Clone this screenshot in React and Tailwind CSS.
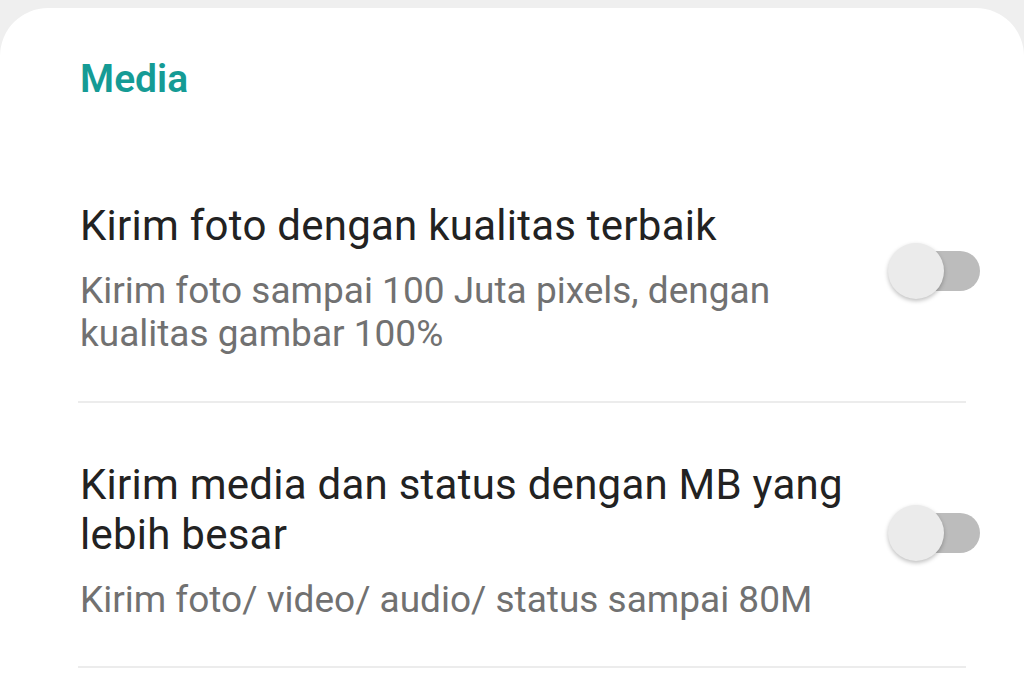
import { useState } from "react";

const Toggle = ({ on, onClick }) => {
  return (
    <button
      onClick={onClick}
      className="relative w-[92px] h-[58px] shrink-0 flex items-center"
    >
      <span className="absolute left-[2px] right-0 h-[40px] rounded-full bg-[#bcbcbc]" />
      <span
        className={`absolute top-[1px] h-[56px] w-[56px] rounded-full bg-[#ebebeb] shadow-[0_2px_4px_rgba(0,0,0,0.25)] ${
          on ? "left-[36px]" : "left-0"
        }`}
      />
    </button>
  );
};

const SettingRow = ({ title, subtitle, on, onToggle, toggleClass }) => {
  return (
    <div className="flex items-center pr-[44px]">
      <div className="w-[770px]">
        <p className="text-[42px] leading-[50px] tracking-[0.25px] text-[#222222]">{title}</p>
        <p className="mt-[18px] text-[37px] leading-[43px] text-[#717171]">{subtitle}</p>
      </div>
      <div className={`ml-auto ${toggleClass}`}>
        <Toggle on={on} onClick={onToggle} />
      </div>
    </div>
  );
};

export default function App() {
  const [best, setBest] = useState(false);
  const [bigMedia, setBigMedia] = useState(false);

  return (
    <div
      className="w-[1024px] h-[676px] bg-[#efefef] pt-[8px] overflow-hidden"
      style={{ fontFamily: "Roboto, 'Noto Sans', sans-serif" }}
    >
      <div className="h-full bg-white rounded-t-[48px] pl-[80px] pt-[54px]">
        <h2 className="text-[39px] leading-[34px] font-semibold text-[#159b95]">Media</h2>

        <div className="mt-[105px]">
          <SettingRow
            title="Kirim foto dengan kualitas terbaik"
            subtitle="Kirim foto sampai 100 Juta pixels, dengan kualitas gambar 100%"
            on={best}
            onToggle={() => setBest(!best)}
            toggleClass="-mt-[14px]"
          />
        </div>

        <div className="mt-[46px] mr-[58px] -ml-[2px] h-[2px] bg-[#ececec]" />

        <div className="mt-[57px]">
          <SettingRow
            title="Kirim media dan status dengan MB yang lebih besar"
            subtitle="Kirim foto/ video/ audio/ status sampai 80M"
            on={bigMedia}
            onToggle={() => setBigMedia(!bigMedia)}
            toggleClass="-mt-[16px]"
          />
        </div>

        <div className="mt-[45px] mr-[58px] -ml-[2px] h-[2px] bg-[#ececec]" />
      </div>
    </div>
  );
}
